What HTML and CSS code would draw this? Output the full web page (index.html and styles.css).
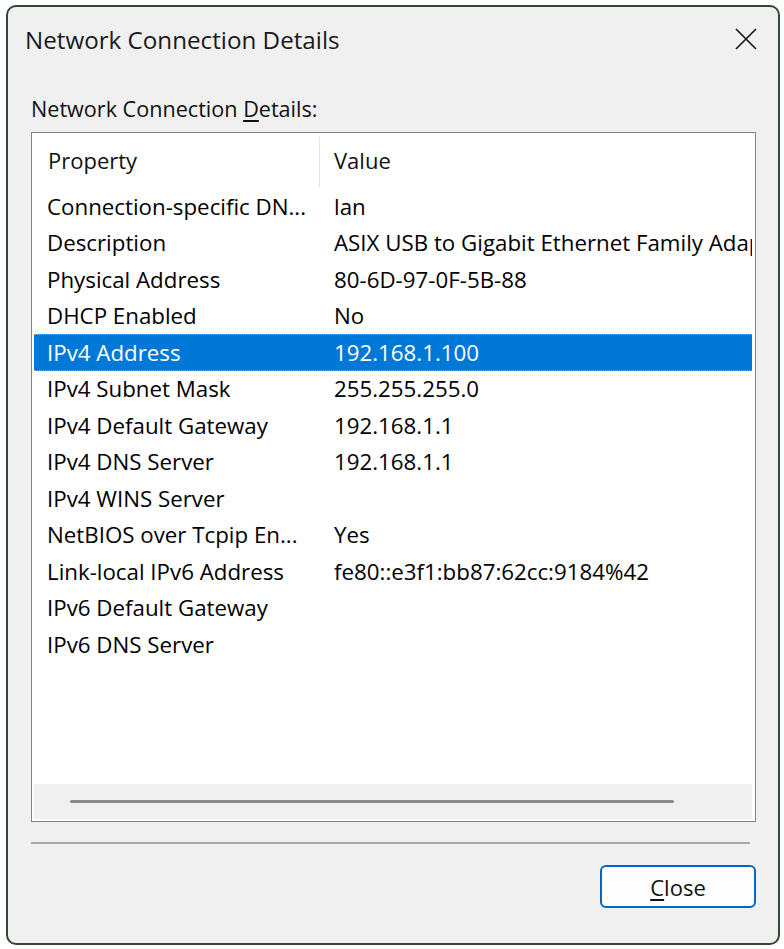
FILE: index.html
```html
<!DOCTYPE html>
<html>
<head>
<meta charset="utf-8">
<link rel="stylesheet" href="styles.css">
</head>
<body>
<div class="window">
  <div class="titlebar">
    <span class="title">Network Connection Details</span>
    <svg class="close-x" width="22" height="22" viewBox="0 0 22 22"><path d="M1 1 L21 21 M21 1 L1 21" stroke="#1b1b1b" stroke-width="1.7" fill="none"/></svg>
  </div>
  <div class="content">
    <div class="label">Network Connection <u>D</u>etails:</div>
    <div class="listbox">
      <div class="list-head">
        <div class="hcell hcell-first">Property</div>
        <div class="hcell">Value</div>
      </div>
      <div class="rows">
        <div class="row"><span class="c1">Connection-specific DN...</span><span class="c2">lan</span></div>
        <div class="row"><span class="c1">Description</span><span class="c2">ASIX USB to Gigabit Ethernet Family Adapter</span></div>
        <div class="row"><span class="c1">Physical Address</span><span class="c2">80-6D-97-0F-5B-88</span></div>
        <div class="row"><span class="c1">DHCP Enabled</span><span class="c2">No</span></div>
        <div class="row selected"><span class="c1">IPv4 Address</span><span class="c2">192.168.1.100</span></div>
        <div class="row"><span class="c1">IPv4 Subnet Mask</span><span class="c2">255.255.255.0</span></div>
        <div class="row"><span class="c1">IPv4 Default Gateway</span><span class="c2">192.168.1.1</span></div>
        <div class="row"><span class="c1">IPv4 DNS Server</span><span class="c2">192.168.1.1</span></div>
        <div class="row"><span class="c1">IPv4 WINS Server</span><span class="c2"></span></div>
        <div class="row"><span class="c1">NetBIOS over Tcpip En...</span><span class="c2">Yes</span></div>
        <div class="row"><span class="c1">Link-local IPv6 Address</span><span class="c2">fe80::e3f1:bb87:62cc:9184%42</span></div>
        <div class="row"><span class="c1">IPv6 Default Gateway</span><span class="c2"></span></div>
        <div class="row"><span class="c1">IPv6 DNS Server</span><span class="c2"></span></div>
      </div>
      <div class="hscroll"><div class="thumb"></div></div>
    </div>
    <div class="separator"></div>
    <div class="buttons">
      <button class="btn"><u>C</u>lose</button>
    </div>
  </div>
</div>
</body>
</html>
```

FILE: styles.css
```css
html, body {
  margin: 0;
  padding: 0;
  background: #ffffff;
}
body {
  font-family: "Open Sans", "Noto Sans", sans-serif;
  color: #000;
}
.window {
  box-sizing: border-box;
  margin: 5px 0 0 6px;
  width: 774px;
  height: 940px;
  border: 2px solid #2f4a2f;
  border-radius: 10px;
  background: #f0f0f0;
  display: flex;
  flex-direction: column;
  overflow: hidden;
}
.titlebar {
  height: 64px;
  display: flex;
  align-items: center;
  justify-content: space-between;
  padding: 0 21px 0 17px;
  flex: none;
}
.title {
  font-size: 24.2px;
  color: #1a1a1a;
}
.close-x {
  display: block;
}
.content {
  padding: 0 22px 0 23px;
  display: flex;
  flex-direction: column;
}
.label {
  margin-top: 23px;
  height: 30px;
  line-height: 30px;
  font-size: 21.6px;
  padding-left: 0;
  color: #111;
}
.label u, .btn u {
  text-decoration-thickness: 2px;
  text-underline-offset: 3px;
}
.listbox {
  margin-top: 8px;
  box-sizing: border-box;
  height: 690px;
  border: 1px solid #858585;
  background: #fff;
  padding: 2px 3px 2px 2px;
  display: flex;
  flex-direction: column;
}
.list-head {
  height: 53px;
  display: grid;
  grid-template-columns: 286px 1fr;
  align-items: center;
  flex: none;
}
.hcell {
  font-size: 22px;
  padding-left: 14px;
  height: 50px;
  line-height: 46px;
  color: #111;
}
.hcell-first {
  border-right: 1px solid #e3e3e3;
}
.rows {
  flex: 1;
  overflow: hidden;
}
.row {
  height: 36.5px;
  box-sizing: border-box;
  display: grid;
  grid-template-columns: 287px 1fr;
  align-items: center;
  font-size: 22.3px;
  white-space: nowrap;
  overflow: hidden;
}
.row .c1 {
  padding-left: 13px;
  overflow: hidden;
}
.row .c2 {
  padding-left: 13px;
  overflow: hidden;
}
.row.selected {
  background: #0078d7;
  color: #fff;
  border-top: 1px dotted #f0902a;
  border-bottom: 1px dotted #f0902a;
}
.hscroll {
  flex: none;
  height: 35px;
  background: #f0f0f0;
  display: flex;
  align-items: flex-start;
}
.thumb {
  margin: 16px 0 0 36px;
  width: 604px;
  height: 3px;
  border-radius: 2px;
  background: #8a8a8a;
}
.separator {
  margin-top: 20px;
  height: 2px;
  margin-right: 6px;
  background: #a8a8a8;
}
.buttons {
  display: flex;
  justify-content: flex-end;
  margin-top: 21px;
}
.btn {
  width: 156px;
  height: 43px;
  box-sizing: border-box;
  border: 2px solid #0067c0;
  border-radius: 6px;
  background: #fdfdfd;
  font-family: inherit;
  font-size: 22px;
  color: #111;
  padding: 0;
}
```
